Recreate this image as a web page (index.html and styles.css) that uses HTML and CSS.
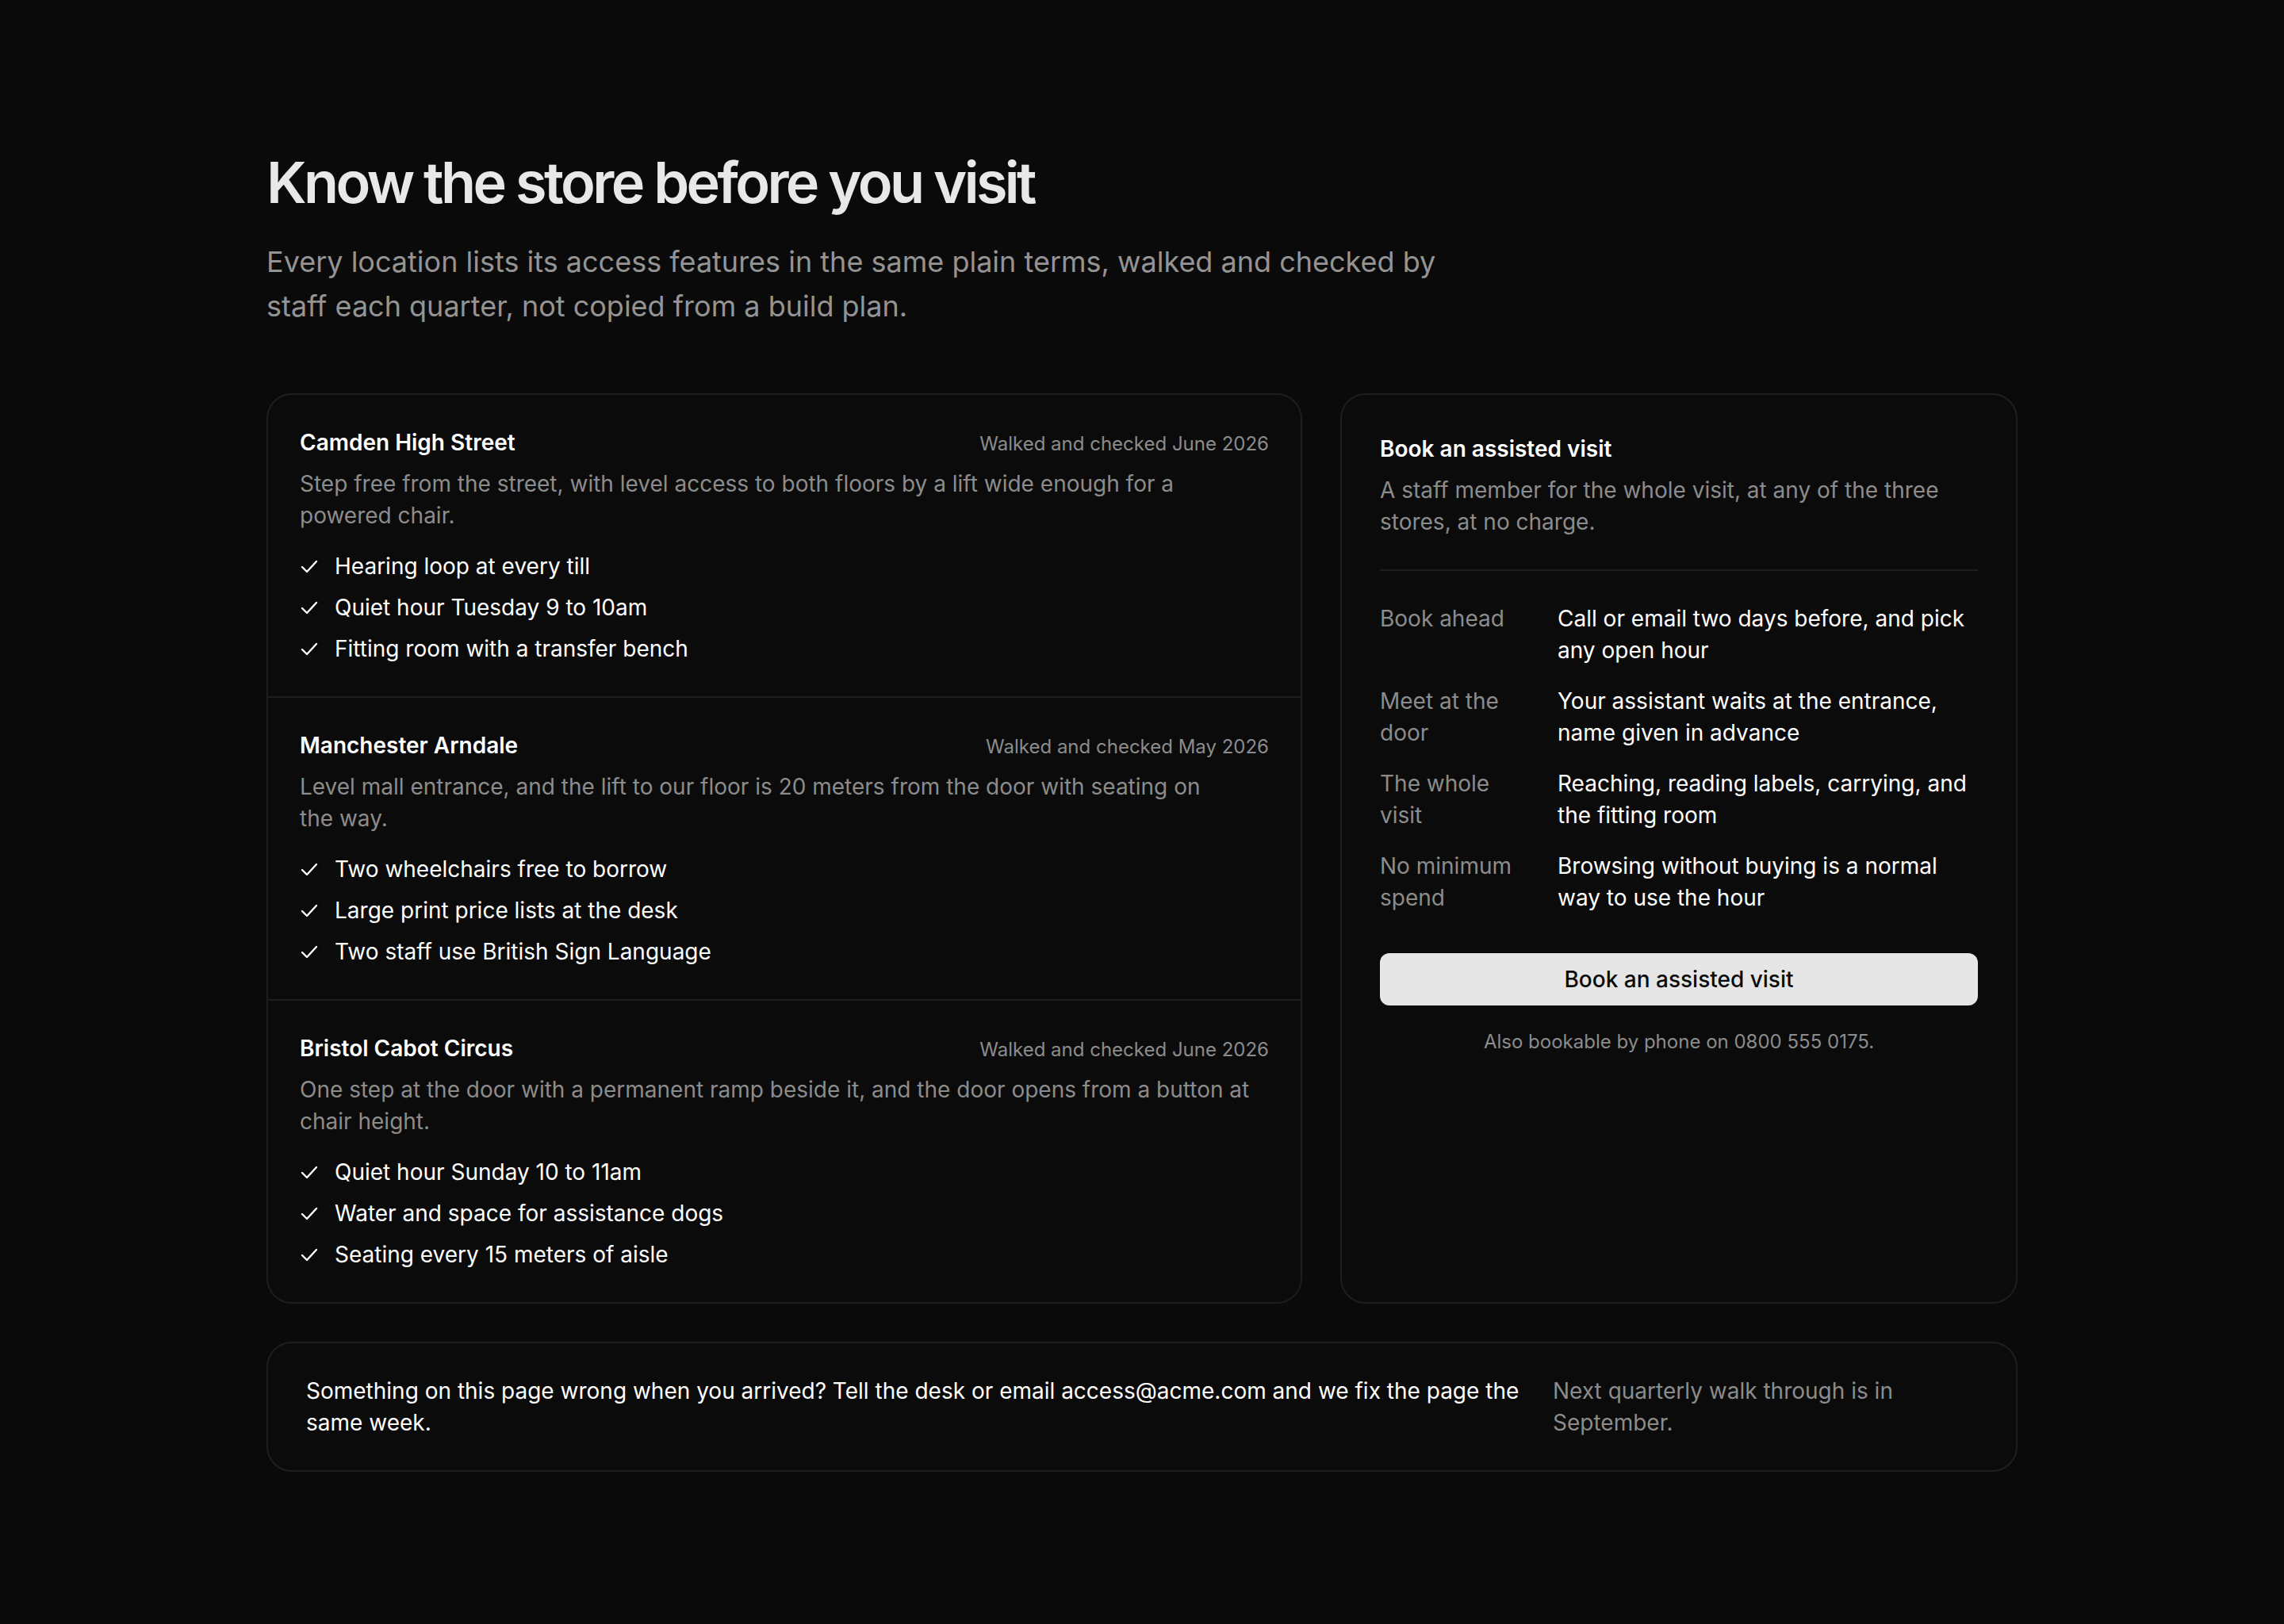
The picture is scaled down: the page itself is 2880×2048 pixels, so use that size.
FILE: index.html
```html
<!DOCTYPE html>
<html lang="en">
<head>
    <meta charset="UTF-8">
    <meta name="viewport" content="width=device-width, initial-scale=1.0">
    <title>Know the store before you visit</title>
    <link rel="stylesheet" href="styles.css">
</head>
<body>
    <div class="page">
        <header class="intro">
            <h1>Know the store before you visit</h1>
            <p>Every location lists its access features in the same plain terms, walked and checked by staff each quarter, not copied from a build plan.</p>
        </header>

        <div class="layout">
            <!-- Stores -->
            <section class="stores">
                <article class="store">
                    <div class="store-head">
                        <h2>Camden High Street</h2>
                        <span class="checked">Walked and checked June 2026</span>
                    </div>
                    <p class="store-desc">Step free from the street, with level access to both floors by a lift wide enough for a powered chair.</p>
                    <ul class="features">
                        <li><svg viewBox="0 0 12 12"><polyline points="1.5,6.5 4.5,9.5 10.5,3"/></svg>Hearing loop at every till</li>
                        <li><svg viewBox="0 0 12 12"><polyline points="1.5,6.5 4.5,9.5 10.5,3"/></svg>Quiet hour Tuesday 9 to 10am</li>
                        <li><svg viewBox="0 0 12 12"><polyline points="1.5,6.5 4.5,9.5 10.5,3"/></svg>Fitting room with a transfer bench</li>
                    </ul>
                </article>

                <article class="store">
                    <div class="store-head">
                        <h2>Manchester Arndale</h2>
                        <span class="checked">Walked and checked May 2026</span>
                    </div>
                    <p class="store-desc">Level mall entrance, and the lift to our floor is 20 meters from the door with seating on the way.</p>
                    <ul class="features">
                        <li><svg viewBox="0 0 12 12"><polyline points="1.5,6.5 4.5,9.5 10.5,3"/></svg>Two wheelchairs free to borrow</li>
                        <li><svg viewBox="0 0 12 12"><polyline points="1.5,6.5 4.5,9.5 10.5,3"/></svg>Large print price lists at the desk</li>
                        <li><svg viewBox="0 0 12 12"><polyline points="1.5,6.5 4.5,9.5 10.5,3"/></svg>Two staff use British Sign Language</li>
                    </ul>
                </article>

                <article class="store">
                    <div class="store-head">
                        <h2>Bristol Cabot Circus</h2>
                        <span class="checked">Walked and checked June 2026</span>
                    </div>
                    <p class="store-desc">One step at the door with a permanent ramp beside it, and the door opens from a button at chair height.</p>
                    <ul class="features">
                        <li><svg viewBox="0 0 12 12"><polyline points="1.5,6.5 4.5,9.5 10.5,3"/></svg>Quiet hour Sunday 10 to 11am</li>
                        <li><svg viewBox="0 0 12 12"><polyline points="1.5,6.5 4.5,9.5 10.5,3"/></svg>Water and space for assistance dogs</li>
                        <li><svg viewBox="0 0 12 12"><polyline points="1.5,6.5 4.5,9.5 10.5,3"/></svg>Seating every 15 meters of aisle</li>
                    </ul>
                </article>
            </section>

            <!-- Assisted visit -->
            <aside class="booking">
                <h2>Book an assisted visit</h2>
                <p class="booking-desc">A staff member for the whole visit, at any of the three stores, at no charge.</p>

                <dl class="terms">
                    <dt>Book ahead</dt>
                    <dd>Call or email two days before, and pick any open hour</dd>
                    <dt>Meet at the door</dt>
                    <dd>Your assistant waits at the entrance, name given in advance</dd>
                    <dt>The whole visit</dt>
                    <dd>Reaching, reading labels, carrying, and the fitting room</dd>
                    <dt>No minimum spend</dt>
                    <dd>Browsing without buying is a normal way to use the hour</dd>
                </dl>

                <button class="book-btn">Book an assisted visit</button>
                <p class="phone-note">Also bookable by phone on 0800 555 0175.</p>
            </aside>
        </div>

        <footer class="report">
            <p class="report-main">Something on this page wrong when you arrived? Tell the desk or email access@acme.com and we fix the page the same week.</p>
            <p class="report-next">Next quarterly walk through is in September.</p>
        </footer>
    </div>
</body>
</html>
```

FILE: styles.css
```css
/* Reset */
* {
    margin: 0;
    padding: 0;
    box-sizing: border-box;
}

body {
    background-color: #0a0a0a;
    color: #f2f2f2;
    font-family: Inter, "Liberation Sans", Arial, sans-serif;
    font-size: 28px;
    line-height: 40px;
}

/* Page container */
.page {
    width: 2208px;
    margin: 0 auto;
    padding: 182px 0 120px;
}

/* Intro */
.intro h1 {
    font-size: 72px;
    line-height: 96px;
    font-weight: 600;
    letter-spacing: -0.05em;
    color: #e8e8e8;
}

.intro p {
    max-width: 1520px;
    margin-top: 24px;
    font-size: 36px;
    line-height: 56px;
    color: #949494;
}

/* Two columns */
.layout {
    display: grid;
    grid-template-columns: minmax(0, 1fr) 854px;
    gap: 48px;
    margin-top: 82px;
}

.stores,
.booking,
.report {
    border: 2px solid #1e1e1e;
    border-radius: 32px;
    background: #0b0b0b;
}

/* Store cards */
.store {
    padding: 40px;
}

.store + .store {
    border-top: 2px solid #1e1e1e;
}

.store-head {
    display: flex;
    justify-content: space-between;
    align-items: baseline;
}

.store-head h2 {
    font-size: 28px;
    font-weight: 600;
    color: #ffffff;
}

.checked {
    font-size: 24px;
    color: #8c8c8c;
}

.store-desc {
    margin-top: 10px;
    color: #8c8c8c;
    text-wrap: pretty;
}

.features {
    list-style: none;
    margin-top: 24px;
    display: flex;
    flex-direction: column;
    gap: 12px;
}

.features li {
    display: flex;
    align-items: center;
    gap: 20px;
    color: #ffffff;
}

.features svg {
    width: 24px;
    height: 24px;
    fill: none;
    stroke: #ffffff;
    stroke-width: 1.2;
    stroke-linecap: round;
    stroke-linejoin: round;
}

/* Booking card */
.booking {
    padding: 48px;
}

.booking h2 {
    font-size: 28px;
    font-weight: 600;
    color: #ffffff;
}

.booking-desc {
    margin-top: 12px;
    color: #8c8c8c;
}

.terms {
    display: grid;
    grid-template-columns: 188px 1fr;
    column-gap: 36px;
    row-gap: 24px;
    margin-top: 40px;
    padding-top: 40px;
    border-top: 2px solid #1e1e1e;
}

.terms dt {
    color: #8c8c8c;
}

.terms dd {
    color: #ffffff;
}

.book-btn {
    display: block;
    width: 100%;
    margin-top: 50px;
    padding: 13px 24px;
    border: none;
    border-radius: 12px;
    background: #e6e6e6;
    color: #0a0a0a;
    font-family: inherit;
    font-size: 28px;
    line-height: 40px;
    font-weight: 500;
    cursor: pointer;
}

.phone-note {
    margin-top: 26px;
    text-align: center;
    font-size: 24px;
    color: #8c8c8c;
}

/* Report strip */
.report {
    display: grid;
    grid-template-columns: minmax(0, 1fr) 536px;
    gap: 24px;
    margin-top: 48px;
    padding: 40px 48px;
}

.report-main {
    color: #ffffff;
}

.report-next {
    color: #8c8c8c;
}
```
